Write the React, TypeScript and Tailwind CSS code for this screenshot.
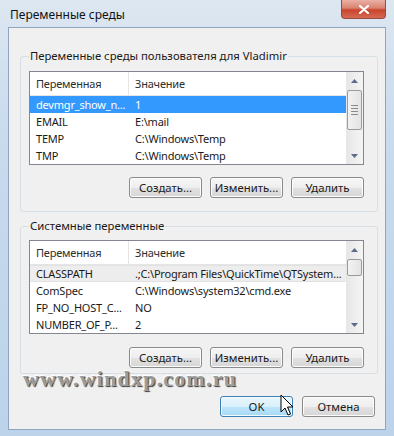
import React from "react"

interface Row {
  name: string
  value: string
}

const userVars: Row[] = [
  { name: "devmgr_show_n...", value: "1" },
  { name: "EMAIL", value: "E:\\mail" },
  { name: "TEMP", value: "C:\\Windows\\Temp" },
  { name: "TMP", value: "C:\\Windows\\Temp" },
]

const systemVars: Row[] = [
  { name: "CLASSPATH", value: ".;C:\\Program Files\\QuickTime\\QTSystem..." },
  { name: "ComSpec", value: "C:\\Windows\\system32\\cmd.exe" },
  { name: "FP_NO_HOST_C...", value: "NO" },
  { name: "NUMBER_OF_P...", value: "2" },
]

function Btn({ label, hot }: { label: string; hot?: boolean }) {
  return (
    <div
      className={
        hot
          ? "flex h-[21px] w-[73px] items-center justify-center rounded-[3px] border border-[#3c7fb1] bg-[linear-gradient(#eaf6fd,#d9f0fc_50%,#bee6fd_50%,#a7d9f5)] shadow-[inset_0_0_0_1px_#f4fbff]"
          : "flex h-[21px] w-[73px] items-center justify-center rounded-[3px] border border-[#8a8a8a] bg-[linear-gradient(#f6f6f6,#eeeeee_50%,#e2e2e2_50%,#d6d6d6)] shadow-[inset_0_0_0_1px_#fcfcfc]"
      }
    >
      {label}
    </div>
  )
}

function Arrow({ up }: { up?: boolean }) {
  return (
    <div className="flex h-[17px] items-center justify-center">
      <svg width="7" height="4" viewBox="0 0 7 4">
        {up ? <path d="M0 4 L3.5 0 L7 4 Z" fill="#5a6e8c" /> : <path d="M0 0 L3.5 4 L7 0 Z" fill="#5a6e8c" />}
      </svg>
    </div>
  )
}

function ListView({ rows, selected, focused, big }: { rows: Row[]; selected: number; focused: boolean; big?: boolean }) {
  return (
    <div className="flex h-[94px] border border-[#828790] bg-white">
      <div className="flex min-w-0 flex-1 flex-col overflow-hidden text-[11px] tracking-[-0.2px]">
        {/* header */}
        <div className="flex h-[24px] items-center border-b border-[#e5e5e5] text-[#2e2e2e]">
          <div className="h-full w-[99px] shrink-0 border-r border-[#e5e5e5] pl-[6px] leading-[24px]">Переменная</div>
          <div className="pl-[6px]">Значение</div>
        </div>
        {rows.map((r, i) => {
          const sel = i === selected
          const cls = sel ? (focused ? "bg-[#3399ff] text-white" : "bg-[#ededed] border-y border-[#e2e2e2]") : ""
          return (
            <div key={i} className={`flex h-[17px] items-center whitespace-nowrap ${cls}`}>
              <div className="w-[99px] shrink-0 pl-[6px]">{r.name}</div>
              <div className="min-w-0 pl-[6px]">{r.value}</div>
            </div>
          )
        })}
      </div>
      {/* scrollbar */}
      <div className="flex w-[17px] shrink-0 flex-col bg-[linear-gradient(90deg,#e6e6e6,#f5f5f5)]">
        <Arrow up />
        <div className="flex-1">
          {big ? (
            <div className="mx-[1px] mt-[1px] flex h-[40px] flex-col items-center justify-center gap-[2px] rounded-[2px] border border-[#9b9b9b] bg-[linear-gradient(90deg,#f2f2f2,#e4e4e4)]">
              <div className="h-px w-[7px] bg-[#8a8a8a]" />
              <div className="h-px w-[7px] bg-[#8a8a8a]" />
              <div className="h-px w-[7px] bg-[#8a8a8a]" />
              <div className="h-px w-[7px] bg-[#8a8a8a]" />
            </div>
          ) : (
            <div className="mx-[1px] mt-[1px] h-[17px] rounded-[2px] border border-[#9b9b9b] bg-[linear-gradient(90deg,#f2f2f2,#e4e4e4)]" />
          )}
        </div>
        <Arrow />
      </div>
    </div>
  )
}

export default function App() {
  return (
    <div className="relative flex h-[436px] w-[394px] flex-col overflow-hidden bg-[linear-gradient(#dde7f1,#c9dbed_30%,#bcd3ea)] font-['Noto_Sans',sans-serif] text-[11.3px] leading-[16px] text-[#1a1a1a]">
      {/* Title bar */}
      <div className="flex h-[27px] items-start">
        <div className="pl-[10px] pt-[7px] text-[12px] text-[#111]">Переменные среды</div>
        <div className="mr-[8px] ml-auto flex h-[19px] w-[45px] items-center justify-center rounded-b-[4px] border border-t-0 border-[#9c4a3c] bg-[linear-gradient(#eab1a5,#d98370_45%,#c9452d_55%,#d66a52)]">
          <svg width="10" height="9" viewBox="0 0 10 9">
            <path d="M1 1 L9 8 M9 1 L1 8" stroke="#fff" strokeWidth="2.2" strokeLinecap="round" />
          </svg>
        </div>
      </div>

      {/* Client area */}
      <div className="mx-[8px] mb-[6px] flex flex-1 flex-col border border-[#8fa5c0] bg-[#f0f0f0]">
        <fieldset className="mt-[20px] ml-[11px] mr-[7px] min-w-0 rounded-[3px] border border-[#d5dfe5] pl-[8px] pr-[13px] pb-[13px]">
          <legend className="px-[1px] leading-[16px]">Переменные среды пользователя для Vladimir</legend>
          <div className="mt-[7px]">
            <ListView rows={userVars} selected={0} focused big />
          </div>
          <div className="mt-[12px] flex justify-end gap-[8px]">
            <Btn label="Создать..." />
            <Btn label="Изменить..." />
            <Btn label="Удалить" />
          </div>
        </fieldset>

        <fieldset className="mt-[6px] ml-[11px] mr-[7px] min-w-0 rounded-[3px] border border-[#d5dfe5] pl-[8px] pr-[13px] pb-[5px]">
          <legend className="px-[1px] leading-[16px]">Системные переменные</legend>
          <div className="mt-[6px]">
            <ListView rows={systemVars} selected={0} focused={false} />
          </div>
          <div className="mt-[13px] flex justify-end gap-[8px]">
            <Btn label="Создать..." />
            <Btn label="Изменить..." />
            <Btn label="Удалить" />
          </div>
        </fieldset>

        <div className="mt-[22px] mr-[10px] flex justify-end gap-[9px]">
          <Btn label="OK" hot />
          <Btn label="Отмена" />
        </div>
      </div>

      {/* watermark */}
      <div className="absolute left-[23px] top-[371px] font-['Liberation_Serif',serif] text-[22px] font-bold tracking-[1.2px] text-[#9c9c9c] [text-shadow:1px_1px_1px_#3a3a3a,-1px_-1px_0_#ffffff]">
        www.windxp.com.ru
      </div>

      {/* mouse cursor */}
      <svg className="absolute left-[280px] top-[394px]" width="14" height="23" viewBox="0 0 14 23">
        <path d="M1 1 L1 18 L5 14 L8 21 L10.5 20 L7.5 13 L13 13 Z" fill="#fff" stroke="#000" strokeWidth="1" strokeLinejoin="round" />
      </svg>
    </div>
  )
}
